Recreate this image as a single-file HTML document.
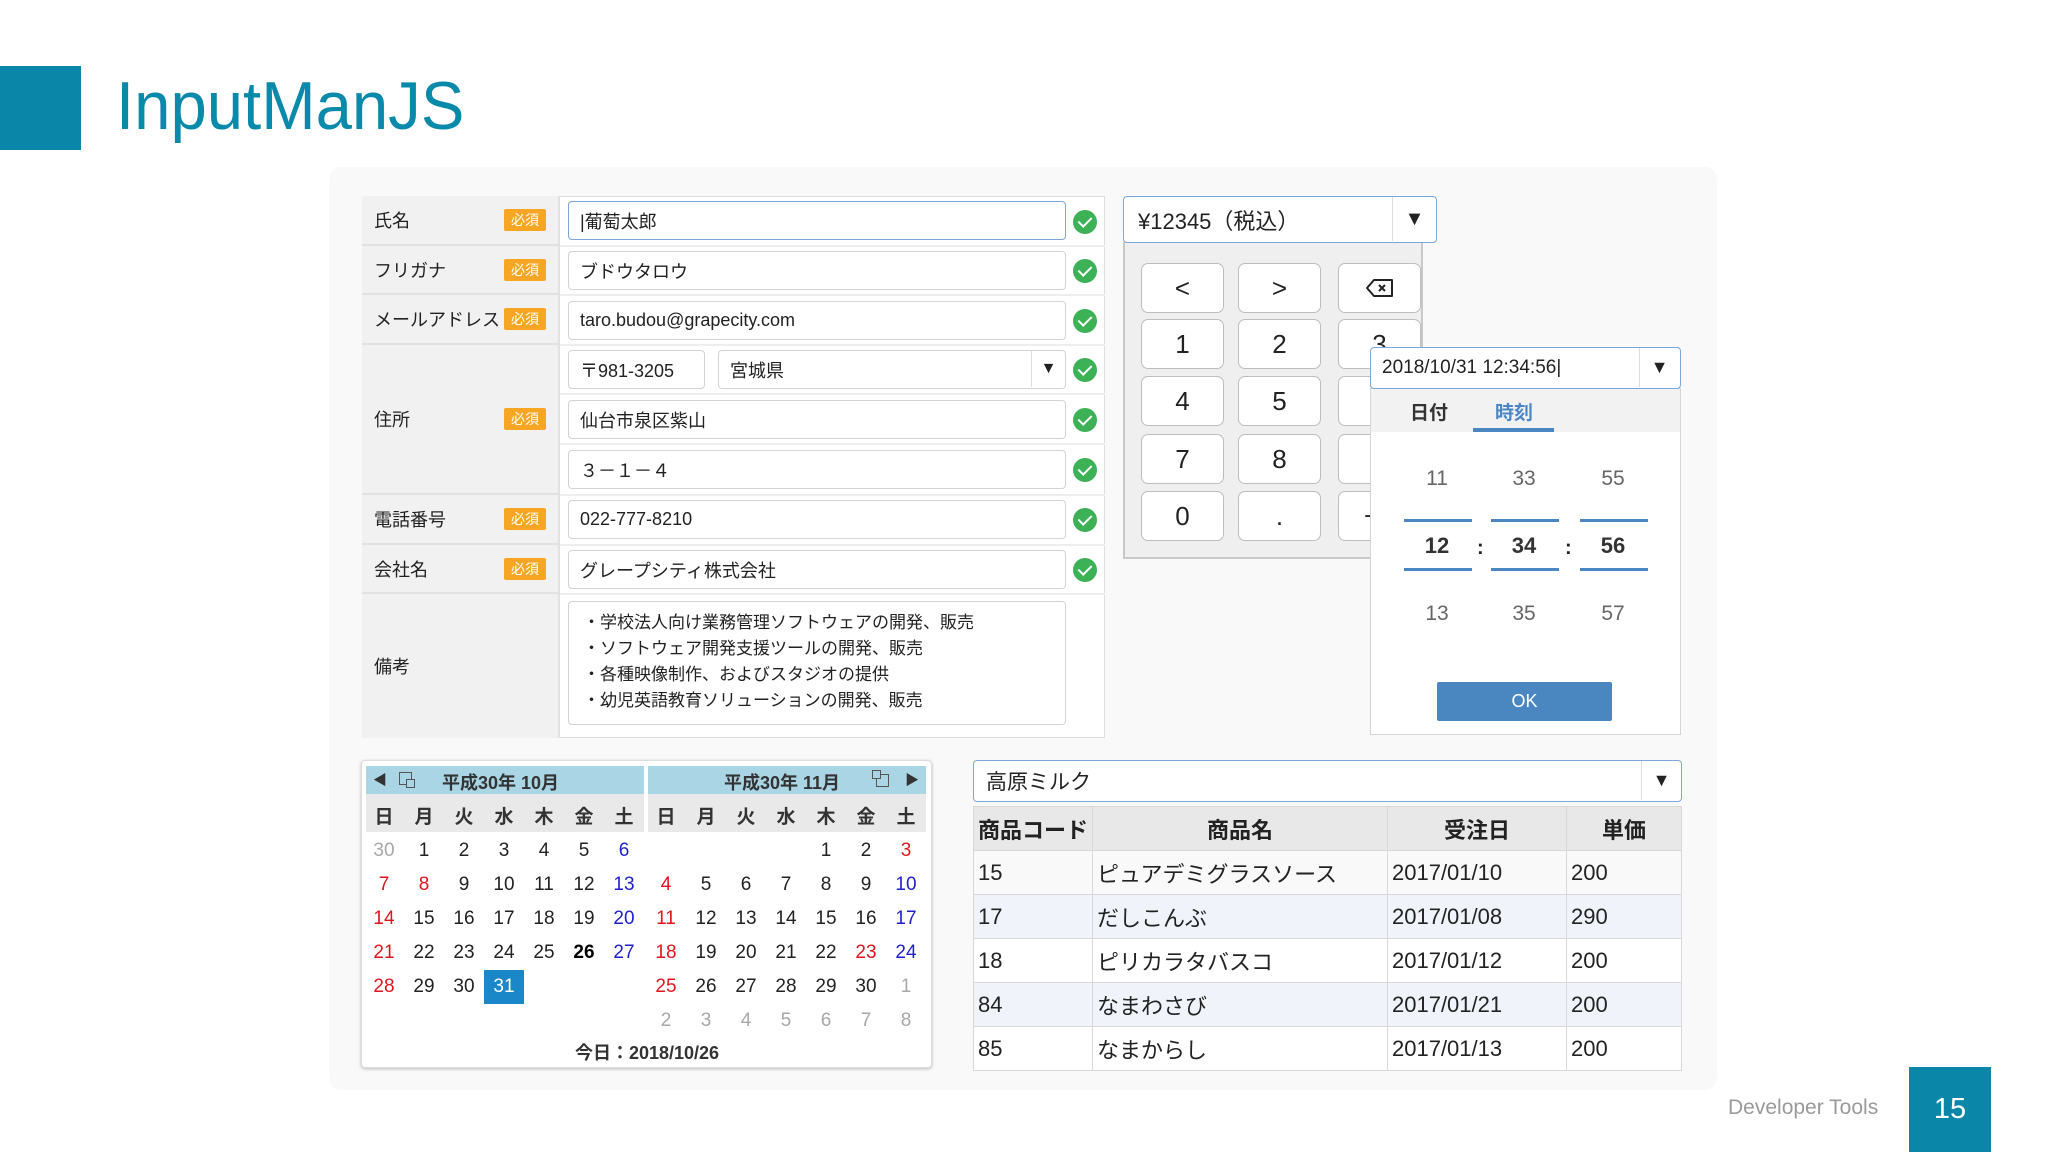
<!DOCTYPE html>
<html><head><meta charset="utf-8">
<style>
*{box-sizing:border-box;margin:0;padding:0}
body{width:2048px;height:1152px;background:#fff;position:relative;overflow:hidden;font-family:"Liberation Sans","Noto Sans CJK JP",sans-serif;color:#222}
.a{position:absolute}
.panel{left:329px;top:167px;width:1388px;height:923px;background:#f9f9f9;border-radius:12px}
.lbl{position:absolute;left:362px;width:196px;background:#f1f1f1;font-size:18px;padding-left:12px;display:flex;align-items:center;border-bottom:2px solid #e2e2e2}
.badge{position:absolute;right:12px;width:42px;height:22px;background:#f6a623;color:#fff;font-size:14px;line-height:22px;text-align:center;border-radius:2px}
.inp{position:absolute;background:#fff;border:1.5px solid #d3d3d3;border-radius:4px;font-size:18px;padding-left:11px;display:flex;align-items:center;height:39px}
.chk{position:absolute;left:1073px;width:24px;height:24px;border-radius:50%;background:#3cb155}
.chk:after{content:"";position:absolute;left:8px;top:4px;width:6px;height:11px;border:solid #fff;border-width:0 2px 2px 0;transform:rotate(45deg)}
.key{position:absolute;width:83px;height:50px;background:#fff;border:1.5px solid #bdbdbd;border-radius:7px;font-size:26px;text-align:center;line-height:48px}
.tnum{position:absolute;width:80px;text-align:center;font-size:21px;color:#666}
.tline{position:absolute;width:68px;height:3px;background:#4a86c0}
.cal td{width:40px;height:34px;text-align:center;font-size:19px;padding:0}
.red{color:#e0161e}.blue{color:#1f1fd0}.gray{color:#a8a8a8}
.tbl{border-collapse:collapse;font-size:22px}
.tbl td,.tbl th{border:1.5px solid #d8d8d8;height:44px;padding:0 4px;text-align:left}
.tbl th{background:#e8e8e8;text-align:center;font-weight:bold}
</style></head><body>
<div class="a" style="left:0;top:66px;width:81px;height:84px;background:#0986a8"></div>
<div class="a" style="left:116px;top:67px;font-size:68px;color:#0a8aab;transform:scaleX(0.96);transform-origin:left top;white-space:nowrap">InputManJS</div>
<div class="a panel"></div>

<!-- form -->
<div class="a" style="left:362px;top:196px;width:743px;height:542px;background:#fff;border:1.5px solid #dedede"></div>
<div class="a" style="left:558px;top:196px;width:2px;height:542px;background:#e2e2e2"></div>
<div class="lbl" style="top:196px;height:50px">氏名<span class="badge">必須</span></div>
<div class="lbl" style="top:246px;height:49px">フリガナ<span class="badge">必須</span></div>
<div class="lbl" style="top:295px;height:50px">メールアドレス<span class="badge">必須</span></div>
<div class="lbl" style="top:345px;height:150px">住所<span class="badge">必須</span></div>
<div class="lbl" style="top:495px;height:50px">電話番号<span class="badge">必須</span></div>
<div class="lbl" style="top:545px;height:49px">会社名<span class="badge">必須</span></div>
<div class="lbl" style="top:594px;height:144px;border-bottom:0">備考</div>
<div class="a" style="left:560px;top:245px;width:545px;height:2px;background:#eee"></div>
<div class="a" style="left:560px;top:294px;width:545px;height:2px;background:#eee"></div>
<div class="a" style="left:560px;top:344px;width:545px;height:2px;background:#eee"></div>
<div class="a" style="left:560px;top:393px;width:545px;height:2px;background:#eee"></div>
<div class="a" style="left:560px;top:443px;width:545px;height:2px;background:#eee"></div>
<div class="a" style="left:560px;top:494px;width:545px;height:2px;background:#eee"></div>
<div class="a" style="left:560px;top:544px;width:545px;height:2px;background:#eee"></div>
<div class="a" style="left:560px;top:593px;width:545px;height:2px;background:#eee"></div>

<div class="inp" style="left:568px;top:201px;width:498px;border-color:#7aa7dc">|葡萄太郎</div><div class="chk" style="top:210px"></div>
<div class="inp" style="left:568px;top:251px;width:498px">ブドウタロウ</div><div class="chk" style="top:259px"></div>
<div class="inp" style="left:568px;top:301px;width:498px">taro.budou@grapecity.com</div><div class="chk" style="top:309px"></div>
<div class="inp" style="left:568px;top:350px;width:137px">〒981-3205</div>
<div class="inp" style="left:718px;top:350px;width:348px">宮城県<span style="position:absolute;left:312px;top:0;height:36px;border-left:1.5px solid #ddd;width:34px;text-align:center;line-height:36px;font-size:16px">▼</span></div><div class="chk" style="top:358px"></div>
<div class="inp" style="left:568px;top:400px;width:498px">仙台市泉区紫山</div><div class="chk" style="top:408px"></div>
<div class="inp" style="left:568px;top:450px;width:498px">３－１－４</div><div class="chk" style="top:458px"></div>
<div class="inp" style="left:568px;top:500px;width:498px">022-777-8210</div><div class="chk" style="top:508px"></div>
<div class="inp" style="left:568px;top:550px;width:498px">グレープシティ株式会社</div><div class="chk" style="top:558px"></div>
<div class="inp" style="left:568px;top:601px;width:498px;height:124px;align-items:flex-start;padding-top:8px;line-height:26px;font-size:17px;display:block;padding-left:14px">・学校法人向け業務管理ソフトウェアの開発、販売<br>・ソフトウェア開発支援ツールの開発、販売<br>・各種映像制作、およびスタジオの提供<br>・幼児英語教育ソリューションの開発、販売</div>

<!-- numeric -->
<div class="a" style="left:1123px;top:242px;width:300px;height:317px;background:#efefef;border:2px solid #c8c8c8;border-top:0"></div>
<div class="inp" style="left:1123px;top:196px;width:314px;height:47px;border-color:#7aa7dc;font-size:22px;padding-left:14px">¥12345（税込）<span style="position:absolute;left:268px;top:0;height:44px;border-left:1.5px solid #ddd;width:44px;text-align:center;line-height:44px;font-size:20px">▼</span></div>
<div class="key" style="left:1141px;top:263px">&lt;</div><div class="key" style="left:1238px;top:263px">&gt;</div>
<div class="key" style="left:1338px;top:263px"><svg width="30" height="20" viewBox="0 0 30 20" style="margin-top:14px"><path d="M9 2H27V18H9L2 10Z" fill="none" stroke="#222" stroke-width="2" stroke-linejoin="round"/><path d="M14 7L20 13M20 7L14 13" stroke="#222" stroke-width="2"/></svg></div>
<div class="key" style="left:1141px;top:319px">1</div><div class="key" style="left:1238px;top:319px">2</div><div class="key" style="left:1338px;top:319px">3</div>
<div class="key" style="left:1141px;top:376px">4</div><div class="key" style="left:1238px;top:376px">5</div><div class="key" style="left:1338px;top:376px">6</div>
<div class="key" style="left:1141px;top:434px">7</div><div class="key" style="left:1238px;top:434px">8</div><div class="key" style="left:1338px;top:434px">9</div>
<div class="key" style="left:1141px;top:491px">0</div><div class="key" style="left:1238px;top:491px">.</div><div class="key" style="left:1338px;top:491px">+/-</div>

<!-- datetime -->
<div class="a" style="left:1370px;top:388px;width:311px;height:347px;background:#fff;border:1.5px solid #d5d5d5"></div>
<div class="a" style="left:1371px;top:389px;width:309px;height:43px;background:#f2f2f2"></div>
<div class="a" style="left:1410px;top:398px;font-size:19px;font-weight:bold;color:#333">日付</div>
<div class="a" style="left:1495px;top:398px;font-size:19px;font-weight:bold;color:#4a86c5">時刻</div>
<div class="a" style="left:1473px;top:428px;width:81px;height:4px;background:#4a86c0"></div>
<div class="inp" style="left:1370px;top:347px;width:311px;height:42px;border-color:#7aa7dc;font-size:19px;padding-left:11px">2018/10/31 12:34:56|<span style="position:absolute;left:268px;top:0;height:39px;border-left:1.5px solid #ddd;width:40px;text-align:center;line-height:39px;font-size:18px">▼</span></div>
<div class="tnum" style="left:1397px;top:467px">11</div><div class="tnum" style="left:1484px;top:467px">33</div><div class="tnum" style="left:1573px;top:467px">55</div>
<div class="tline" style="left:1404px;top:519px"></div><div class="tline" style="left:1491px;top:519px"></div><div class="tline" style="left:1580px;top:519px"></div>
<div class="tnum" style="left:1397px;top:533px;font-weight:bold;color:#333;font-size:22px">12</div><div class="tnum" style="left:1484px;top:533px;font-weight:bold;color:#333;font-size:22px">34</div><div class="tnum" style="left:1573px;top:533px;font-weight:bold;color:#333;font-size:22px">56</div>
<div class="a" style="left:1477px;top:537px;font-size:20px;font-weight:bold">:</div><div class="a" style="left:1565px;top:537px;font-size:20px;font-weight:bold">:</div>
<div class="tline" style="left:1404px;top:568px"></div><div class="tline" style="left:1491px;top:568px"></div><div class="tline" style="left:1580px;top:568px"></div>
<div class="tnum" style="left:1397px;top:602px">13</div><div class="tnum" style="left:1484px;top:602px">35</div><div class="tnum" style="left:1573px;top:602px">57</div>
<div class="a" style="left:1437px;top:682px;width:175px;height:39px;background:#4a86c0;color:#fff;font-size:18px;text-align:center;line-height:39px;border-radius:2px">OK</div>

<!-- calendar -->
<div class="a" style="left:361px;top:760px;width:571px;height:308px;background:#fff;border:1.5px solid #ddd;border-radius:4px;box-shadow:0 1px 3px rgba(0,0,0,.25)"></div>
<div class="a" style="left:366px;top:766px;width:278px;height:28px;background:#a9d5e4"></div>
<div class="a" style="left:648px;top:766px;width:278px;height:28px;background:#a9d5e4"></div>
<div class="a" style="left:366px;top:794px;width:278px;height:38px;background:#e9e9e9"></div>
<div class="a" style="left:648px;top:794px;width:278px;height:38px;background:#e9e9e9"></div>
<div class="a" style="left:373px;top:770px;font-size:14px;color:#333">◀</div>
<div class="a" style="left:399px;top:772px;width:13px;height:13px;border:1.5px solid #555"></div><div class="a" style="left:406px;top:779px;width:9px;height:9px;border:1.5px solid #555;background:#a9d5e4"></div>
<div class="a" style="left:442px;top:769px;font-size:18px;font-weight:bold;color:#333">平成30年 10月</div>
<div class="a" style="left:724px;top:769px;font-size:18px;font-weight:bold;color:#333">平成30年 11月</div>
<div class="a" style="left:876px;top:774px;width:13px;height:13px;border:1.5px solid #555"></div><div class="a" style="left:872px;top:770px;width:9px;height:9px;border:1.5px solid #555;background:#a9d5e4"></div>
<div class="a" style="left:905px;top:770px;font-size:14px;color:#333">▶</div>
<table class="a cal" style="left:364px;top:796px;border-collapse:collapse">
<tr style="font-weight:bold;color:#333;height:38px"><td>日</td><td>月</td><td>火</td><td>水</td><td>木</td><td>金</td><td>土</td></tr>
<tr><td class="gray">30</td><td>1</td><td>2</td><td>3</td><td>4</td><td>5</td><td class="blue">6</td></tr>
<tr><td class="red">7</td><td class="red">8</td><td>9</td><td>10</td><td>11</td><td>12</td><td class="blue">13</td></tr>
<tr><td class="red">14</td><td>15</td><td>16</td><td>17</td><td>18</td><td>19</td><td class="blue">20</td></tr>
<tr><td class="red">21</td><td>22</td><td>23</td><td>24</td><td>25</td><td style="font-weight:bold;color:#000">26</td><td class="blue">27</td></tr>
<tr><td class="red">28</td><td>29</td><td>30</td><td style="background:#1a87c9;color:#fff">31</td><td></td><td></td><td></td></tr>
<tr><td></td><td></td><td></td><td></td><td></td><td></td><td></td></tr>
</table>
<table class="a cal" style="left:646px;top:796px;border-collapse:collapse">
<tr style="font-weight:bold;color:#333;height:38px"><td>日</td><td>月</td><td>火</td><td>水</td><td>木</td><td>金</td><td>土</td></tr>
<tr><td></td><td></td><td></td><td></td><td>1</td><td>2</td><td class="red">3</td></tr>
<tr><td class="red">4</td><td>5</td><td>6</td><td>7</td><td>8</td><td>9</td><td class="blue">10</td></tr>
<tr><td class="red">11</td><td>12</td><td>13</td><td>14</td><td>15</td><td>16</td><td class="blue">17</td></tr>
<tr><td class="red">18</td><td>19</td><td>20</td><td>21</td><td>22</td><td class="red">23</td><td class="blue">24</td></tr>
<tr><td class="red">25</td><td>26</td><td>27</td><td>28</td><td>29</td><td>30</td><td class="gray">1</td></tr>
<tr class="gray"><td>2</td><td>3</td><td>4</td><td>5</td><td>6</td><td>7</td><td>8</td></tr>
</table>
<div class="a" style="left:362px;top:1039px;width:570px;text-align:center;font-size:18px;font-weight:bold;color:#333">今日：2018/10/26</div>

<!-- combo + grid -->
<div class="inp" style="left:973px;top:760px;width:709px;height:42px;border-color:#7aa7dc;font-size:21px;padding-left:12px">高原ミルク<span style="position:absolute;left:667px;top:0;height:39px;border-left:1.5px solid #ddd;width:40px;text-align:center;line-height:39px;font-size:18px">▼</span></div>
<table class="a tbl" style="left:973px;top:806px;width:709px">
<tr><th style="width:119px">商品コード</th><th style="width:295px">商品名</th><th style="width:179px">受注日</th><th>単価</th></tr>
<tr><td>15</td><td>ピュアデミグラスソース</td><td>2017/01/10</td><td>200</td></tr>
<tr style="background:#f0f4fa"><td>17</td><td>だしこんぶ</td><td>2017/01/08</td><td>290</td></tr>
<tr style="background:#fff"><td>18</td><td>ピリカラタバスコ</td><td>2017/01/12</td><td>200</td></tr>
<tr style="background:#f0f4fa"><td>84</td><td>なまわさび</td><td>2017/01/21</td><td>200</td></tr>
<tr style="background:#fff"><td>85</td><td>なまからし</td><td>2017/01/13</td><td>200</td></tr>
</table>

<div class="a" style="left:1728px;top:1096px;font-size:21px;color:#9a9a9a">Developer Tools</div>
<div class="a" style="left:1909px;top:1067px;width:82px;height:85px;background:#0986a8;color:#fff;font-size:29px;text-align:center;line-height:84px">15</div>
</body></html>
